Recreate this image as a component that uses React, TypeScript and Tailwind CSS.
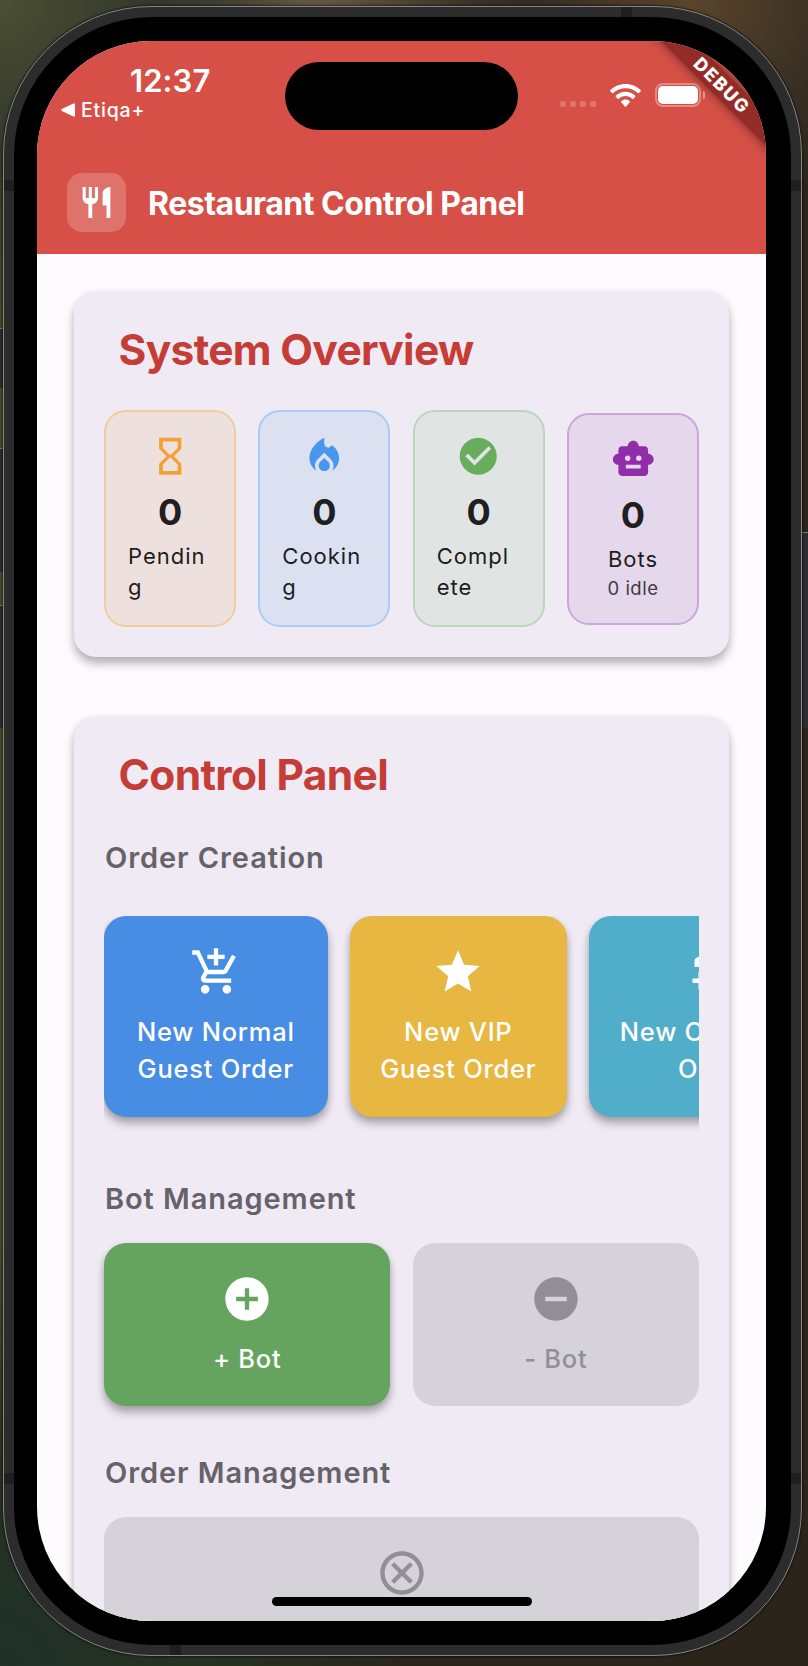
import type { ReactNode } from 'react';
import type { IconType } from 'react-icons';
import {
  MdRestaurant,
  MdHourglassEmpty,
  MdLocalFireDepartment,
  MdCheckCircle,
  MdSmartToy,
  MdAddShoppingCart,
  MdStar,
  MdAddCircle,
  MdRemoveCircle,
  MdOutlineCancel,
} from 'react-icons/md';

function StatusBar() {
  return (
    <div className="flex h-[132px] items-start justify-between pr-[61px] pl-[24px] text-white">
      <div className="flex flex-col pt-[25px]">
        <span className="pl-[69px] text-[31px] leading-[30px] font-semibold tracking-[0.1px]">12:37</span>
        <span className="mt-[2px] flex items-center gap-[6px] text-[19.500px] leading-[24px] font-medium tracking-[0.8px]">
          <svg className="h-[14px] w-[14px]" viewBox="0 0 14 14" fill="currentColor">
            <path d="M12.5.6C13.300.2 14 .7 14 1.500V12.500c0 .8-.7 1.300-1.500.9L.8 7.900C0 7.500 0 6.500.8 6.100z" />
          </svg>
          Etiqa+
        </span>
      </div>
      <div className="flex items-center pt-[42px]">
        <div className="mt-[17px] mr-[14px] flex gap-[4px]">
          <i className="h-[6px] w-[6px] rounded-[2px] bg-white/20" />
          <i className="h-[6px] w-[6px] rounded-[2px] bg-white/20" />
          <i className="h-[6px] w-[6px] rounded-[2px] bg-white/20" />
          <i className="h-[6px] w-[6px] rounded-[2px] bg-white/20" />
        </div>
        <svg className="mr-[14px] h-[23px] w-[31px]" viewBox="0 0 31 23" fill="currentColor">
          <path d="M15.500 0C21.400 0 26.700 2.300 30.600 6.100c.4.4.4.9 0 1.300l-1.700 1.700c-.3.3-.8.3-1.200 0C24.500 6.100 20.200 4.300 15.500 4.300S6.500 6.100 3.300 9.100c-.4.3-.9.3-1.200 0L.4 7.400c-.4-.4-.4-.9 0-1.300C4.300 2.300 9.600 0 15.500 0z" />
          <path d="M15.500 7.800c3.700 0 7.100 1.400 9.600 3.800.4.4.4.9 0 1.300l-1.800 1.800c-.3.300-.8.300-1.200 0-1.700-1.600-4-2.600-6.600-2.600s-4.900 1-6.600 2.600c-.4.3-.9.3-1.200 0l-1.800-1.800c-.4-.4-.4-.9 0-1.300 2.500-2.400 5.900-3.800 9.600-3.800z" />
          <path d="M15.500 15.600c1.600 0 3.100.6 4.200 1.500.4.4.4.9 0 1.200l-3.600 4.300c-.3.400-.9.400-1.200 0l-3.600-4.300c-.4-.3-.4-.8 0-1.200 1.100-.9 2.600-1.500 4.200-1.500z" />
        </svg>
        <div className="flex h-[24px] w-[46px] rounded-[8px] border-2 border-white/35 p-px">
          <div className="flex-1 rounded-[5px] bg-white" />
        </div>
        <div className="ml-[2px] h-[8px] w-[2px] rounded-r-full bg-white/45" />
      </div>
    </div>
  );
}

function DebugRibbon() {
  return (
    <div className="absolute top-[33px] right-[-56px] flex h-[23px] w-[200px] rotate-45 items-center justify-center bg-[#942b26] text-[18px] leading-[22px] font-extrabold tracking-[1.700px] text-white shadow-[0_0_11px_rgba(0,0,0,0.5)]">
      DEBUG
    </div>
  );
}

function Panel({ title, children, className }: { title: string; children: ReactNode; className: string }) {
  return (
    <section
      className={
        'rounded-[22px] bg-[#f0eaf5] px-[30px] pt-[33px] shadow-[0_7px_10px_rgba(0,0,0,0.25),0_2px_9px_rgba(0,0,0,0.08)] ' +
        className
      }
    >
      <h2 className="pl-[14.500px] text-[42.500px] leading-[52px] font-bold tracking-[-0.680px] text-[#c43d36]">{title}</h2>
      {children}
    </section>
  );
}

type StatProps = { icon: IconType; label: string[]; tone: string; iconTone: string; note?: string };

function Stat({ icon: Icon, label, tone, iconTone, note }: StatProps) {
  return (
    <div className={'flex min-w-0 flex-1 flex-col items-center rounded-[22px] border-2 px-[22px] py-[22px] ' + tone}>
      <Icon className={'h-[44.500px] w-[44.500px] ' + iconTone} />
      <span className="mt-[11.500px] text-[36px] leading-[44px] font-bold text-[#201e21]">0</span>
      <span className={'mt-[7px] text-[22px] leading-[31px] font-normal tracking-[1px] text-[#1e1c20] ' + (note ? '' : 'w-full')}>
        {label.map((part) => (
          <span key={part} className="block whitespace-nowrap">
            {part}
          </span>
        ))}
      </span>
      {note && <span className="text-[18.500px] leading-[26px] tracking-[0.500px] text-[#3f3b42]">{note}</span>}
    </div>
  );
}

function ActionCard({ icon, lines, className }: { icon: ReactNode; lines: string[]; className: string }) {
  return (
    <div className={'flex flex-col items-center rounded-[22px] pt-[30px] ' + className}>
      {icon}
      <div className="mt-[15px] text-center text-[25.500px] leading-[37px] font-medium tracking-[0.740px] whitespace-nowrap">
        {lines.map((line) => (
          <div key={line}>{line}</div>
        ))}
      </div>
    </div>
  );
}

function SectionLabel({ children, className }: { children: ReactNode; className: string }) {
  return (
    <h3 className={'pl-px text-[29px] leading-[36px] font-[580] tracking-[0.920px] text-[#656368] ' + className}>{children}</h3>
  );
}

const raised = 'shadow-[0_7px_9px_rgba(0,0,0,0.25),0_2px_7px_rgba(0,0,0,0.12)]';

export default function App() {
  return (
    <div
      className="relative flex h-[1666px] w-[808px] items-start overflow-hidden bg-[#2a241b] pt-[6px] pl-[3px]"
      style={{
        fontFamily: 'Inter, "Liberation Sans", sans-serif',
        backgroundImage:
          'radial-gradient(circle at 0% 0%, #4b4f35 0, #343829 150px, transparent 330px), radial-gradient(circle at 300px 0px, #6a5c48 0, #4a4030 120px, transparent 230px), radial-gradient(circle at 690px 0px, #5a452c 0, #3a3023 130px, transparent 220px), radial-gradient(circle at 0% 100%, #20302a 0, #26321f 200px, transparent 420px), linear-gradient(90deg, #474a26 0, #45401f 12px, #2a241b 100px)',
      }}
    >
      <div className="absolute top-[328px] left-0 h-[60px] w-[3px] border-t border-[#777] bg-[#2c2c2f]" />
      <div className="absolute top-[448px] left-0 h-[124px] w-[3px] border-t border-[#777] bg-[#2c2c2f]" />
      <div className="absolute top-[605px] left-0 h-[123px] w-[3px] border-t border-[#777] bg-[#2c2c2f]" />
      <div className="absolute top-[532px] right-0 h-[196px] w-[6px] border-t border-[#777] bg-[#2c2c2e]" />

      <div className="relative h-[1650px] w-[799px] shrink-0 rounded-[148px] border border-[#868686] bg-[#2c2c2c] p-[10px] shadow-[0_0_2px_1px_rgba(0,0,0,0.5)]">
        <div className="absolute top-[173px] left-0 h-[11px] w-[10px] bg-[#1f1f1f]" />
        <div className="absolute top-[173px] right-0 h-[11px] w-[10px] bg-[#1f1f1f]" />
        <div className="absolute top-[1466px] left-0 h-[11px] w-[10px] bg-[#1f1f1f]" />
        <div className="absolute top-[1466px] right-0 h-[11px] w-[10px] bg-[#1f1f1f]" />
        <div className="absolute top-0 left-[617px] h-[10px] w-[11px] bg-[#1f1f1f]" />
        <div className="absolute bottom-0 left-[166px] h-[10px] w-[11px] bg-[#1f1f1f]" />

        <div className="relative h-full w-full rounded-[138px] bg-black pt-[24px] pl-[23px]">
          <main className="relative h-[1580px] w-[729px] overflow-hidden rounded-[114px] bg-[#fdfbfe]">
            <header className="h-[213px] bg-[#d65047]">
              <StatusBar />
              <div className="flex items-center pl-[30px]">
                <div className="flex h-[59px] w-[59px] items-center justify-center rounded-[15px] bg-white/20">
                  <MdRestaurant className="h-[37px] w-[37px] text-white" />
                </div>
                <h1 className="pt-[2px] pl-[22px] text-[32px] leading-[40px] font-[650] tracking-[-0.480px] whitespace-nowrap text-white">
                  Restaurant Control Panel
                </h1>
              </div>
            </header>

            <div className="flex flex-col gap-[59px] px-[37px] pt-[37px]">
              <Panel title="System Overview" className="h-[366px]">
                <div className="mt-[34px] flex items-center gap-[22.300px]">
                  <Stat
                    icon={MdHourglassEmpty}
                    label={['Pendin', 'g']}
                    tone="border-[#f0cd9d] bg-[#eee1dd]"
                    iconTone="text-[#f3a037]"
                  />
                  <Stat
                    icon={MdLocalFireDepartment}
                    label={['Cookin', 'g']}
                    tone="border-[#abcbf2] bg-[#dce1f2]"
                    iconTone="text-[#4896ee]"
                  />
                  <Stat
                    icon={MdCheckCircle}
                    label={['Compl', 'ete']}
                    tone="border-[#b9d8ba] bg-[#e0e5e3]"
                    iconTone="text-[#67ad5c]"
                  />
                  <Stat
                    icon={MdSmartToy}
                    label={['Bots']}
                    note="0 idle"
                    tone="border-[#cba5dc] bg-[#e5d8ec]"
                    iconTone="text-[#8f2ea8]"
                  />
                </div>
              </Panel>

              <Panel title="Control Panel" className="h-[1100px]">
                <SectionLabel className="mt-[38.500px]">Order Creation</SectionLabel>
                <div className="mt-[40.500px] flex gap-[22.300px] overflow-hidden pb-[16px]">
                  <ActionCard
                    icon={<MdAddShoppingCart className="h-[52px] w-[52px]" />}
                    lines={['New Normal', 'Guest Order']}
                    className={'h-[200.500px] w-[223.500px] shrink-0 bg-[#478de3] text-white ' + raised}
                  />
                  <ActionCard
                    icon={<MdStar className="h-[52px] w-[52px]" />}
                    lines={['New VIP', 'Guest Order']}
                    className={'h-[200.500px] w-[217px] shrink-0 bg-[#e7b741] text-white ' + raised}
                  />
                  <ActionCard
                    icon={
                      <svg className="h-[52px] w-[52px]" viewBox="0 0 52 52" fill="currentColor">
                        <path d="M5.500 21V15.500C5.500 12.500 7.500 10.700 10.500 10.700H22V21zM9.500 26h5v6.500H22V37h-7.500v6h-5v-6H3.500v-4.500h6z" />
                      </svg>
                    }
                    lines={['New Corporate', 'Order']}
                    className={
                      'h-[200.500px] w-[251px] shrink-0 bg-[#51aecb] text-white [&>div>div:first-child]:pl-[5px] ' + raised
                    }
                  />
                </div>
                <SectionLabel className="mt-[48px]">Bot Management</SectionLabel>
                <div className="mt-[26px] flex gap-[22.300px]">
                  <ActionCard
                    icon={<MdAddCircle className="h-[52px] w-[52px]" />}
                    lines={['+ Bot']}
                    className={'h-[163px] flex-1 bg-[#65a45e] text-white ' + raised}
                  />
                  <ActionCard
                    icon={<MdRemoveCircle className="h-[52px] w-[52px]" />}
                    lines={['- Bot']}
                    className="h-[163px] flex-1 bg-[#d5d2d9] text-[#918e95]"
                  />
                </div>
                <SectionLabel className="mt-[49.500px]">Order Management</SectionLabel>
                <div className="mt-[25.500px] flex">
                  <ActionCard
                    icon={<MdOutlineCancel className="h-[52px] w-[52px]" />}
                    lines={[]}
                    className="h-[163px] flex-1 bg-[#d5d2d9] text-[#918e95]"
                  />
                </div>
              </Panel>
            </div>

            <div className="absolute top-[21px] left-[248px] h-[68px] w-[233px] rounded-full bg-black" />
            <DebugRibbon />
            <div className="absolute bottom-[15px] left-[235px] h-[9px] w-[260px] rounded-full bg-black" />
          </main>
        </div>
      </div>
    </div>
  );
}
